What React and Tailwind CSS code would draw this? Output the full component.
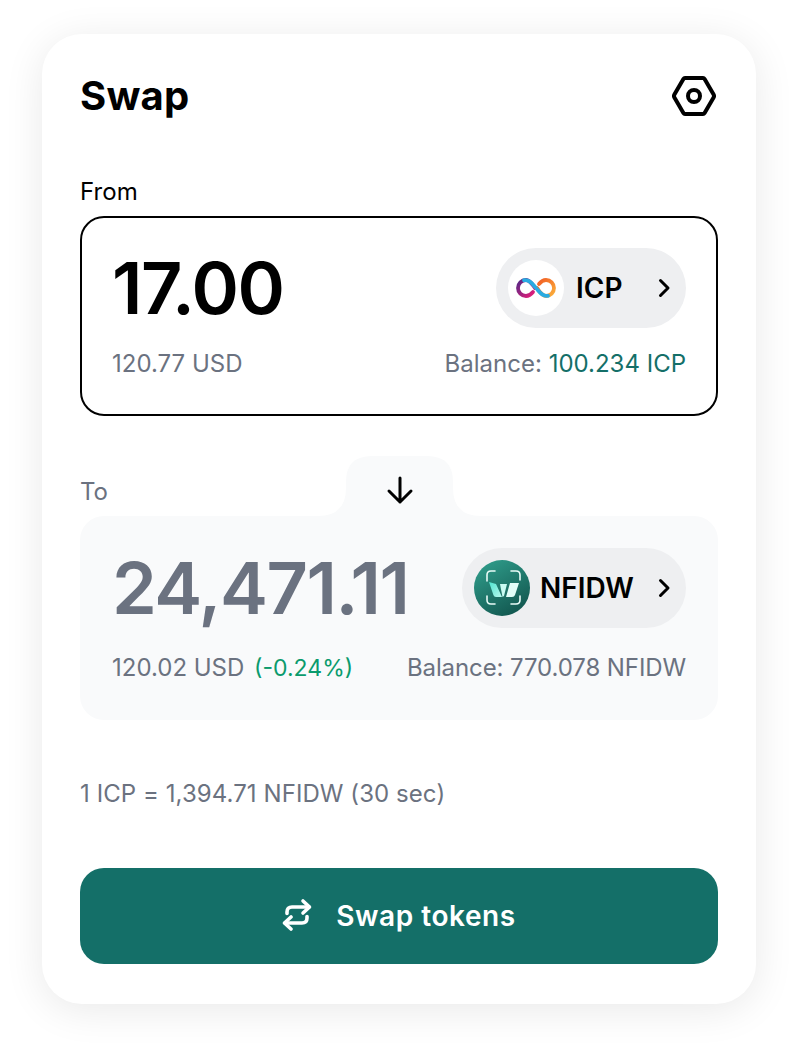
import React from 'react';

const Chevron = () => (
  <svg width="28" height="28" viewBox="0 0 28 28" fill="none" stroke="currentColor" strokeWidth="3" strokeLinecap="round" strokeLinejoin="round" className="text-black">
    <path d="M9.5 6.5 L17 14 L9.5 21.5" />
  </svg>
);

const IcpLogo = () => (
  <svg width="40" height="22" viewBox="0 0 40 22" fill="none" strokeWidth="3.8" strokeLinecap="round">
    <defs>
      <linearGradient id="icpLeft" x1="0" y1="0" x2="1" y2="1">
        <stop offset="0" stopColor="#522785" />
        <stop offset="1" stopColor="#ed1e79" />
      </linearGradient>
      <linearGradient id="icpRight" x1="0" y1="0" x2="1" y2="1">
        <stop offset="0" stopColor="#f15a24" />
        <stop offset="1" stopColor="#fbb03b" />
      </linearGradient>
    </defs>
    <path d="M19 11 C16 7 14 3 10 3 C5.5 3 2 6.5 2 11 C2 15.5 5.5 19 10 19 C12.5 19 15 17.5 17 15" stroke="url(#icpLeft)" />
    <path d="M21 11 C24 15 26 19 30 19 C34.5 19 38 15.5 38 11 C38 6.5 34.5 3 30 3 C27.5 3 25 4.5 23 7" stroke="url(#icpRight)" />
    <path d="M8 3.2 C14 2 17 8 20 11 C23 14 26 20 32 18.8" stroke="#29abe2" />
  </svg>
);

const NfidwLogo = () => (
  <svg width="56" height="56" viewBox="0 0 56 56" fill="none">
    <defs>
      <linearGradient id="nfidwBg" x1="0.2" y1="0" x2="0.8" y2="1">
        <stop offset="0" stopColor="#2f9c8a" />
        <stop offset="1" stopColor="#11544d" />
      </linearGradient>
      <linearGradient id="nfidwMark" x1="0" y1="0" x2="1" y2="1">
        <stop offset="0" stopColor="#4fe3cf" />
        <stop offset="1" stopColor="#b8f9ee" />
      </linearGradient>
    </defs>
    <circle cx="28" cy="28" r="28" fill="url(#nfidwBg)" />
    <g stroke="#e8fbf7" strokeWidth="1.6" strokeLinecap="round">
      <path d="M13 21 V15 Q13 11 17 11 H21" />
      <path d="M37 11 H42 Q46 11 46 15 V20" />
      <path d="M13 36 V40 Q13 44 17 44 H21" />
      <path d="M37 44 H42 Q46 44 46 40 V36" />
    </g>
    <path d="M15 22 L22 24 L28 37 H22 Q20 37 19.4 35 Z" fill="url(#nfidwMark)" />
    <path d="M26 24 H33 L30 36 L28.5 37 Z" fill="#c9fbf2" />
    <path d="M36 23 H45 L41 35 Q40.4 37 38 37 H32 Z" fill="#e2fdf8" />
  </svg>
);

const TokenPill = ({ logo, name, nameClass }) => (
  <button className="flex h-20 w-full items-center rounded-full bg-[#eeeff1] pl-3 pr-[7px]">
    {logo}
    <span className={`text-[28px] font-semibold leading-none text-black ${nameClass}`}>{name}</span>
    <span className="ml-auto"><Chevron /></span>
  </button>
);

export default function App() {
  return (
    <div className="min-h-[1054px] bg-white pl-[42px] pr-[42px] pt-[34px] font-['Inter',sans-serif]">
      <div className="h-[970px] w-[714px] rounded-[40px] bg-white px-[38px] shadow-[0_6px_40px_rgba(0,0,0,0.09)]">
        <div className="flex h-[124px] items-center justify-between pb-[1px]">
          <h1 className="text-[40px] font-bold leading-none tracking-[0.2px] text-black">Swap</h1>
          <svg width="44" height="40" viewBox="0 0 44 40" fill="none" stroke="black" strokeWidth="4" strokeLinejoin="round" className="mr-[2px]">
            <path d="M13 2 H31 Q32 2 32.6 3 L41.6 18.6 Q42.4 20 41.6 21.4 L32.6 37 Q32 38 31 38 H13 Q12 38 11.4 37 L2.4 21.4 Q1.6 20 2.4 18.6 L11.4 3 Q12 2 13 2 Z" />
            <circle cx="22" cy="20" r="6" />
          </svg>
        </div>

        <p className="mt-[19px] h-[39px] text-[24px] leading-[30px] tracking-[0.05px] text-black">From</p>

        <div className="h-[200px] rounded-[24px] border-2 border-black px-[30px] pt-[30px]">
          <div className="flex h-[80px] items-center justify-between">
            <span className="text-[72px] font-semibold leading-none tracking-[-1.44px] text-black">17.00</span>
            <div className="w-[190px]">
              <TokenPill
                logo={<span className="flex h-14 w-14 items-center justify-center rounded-full bg-white"><IcpLogo /></span>}
                name="ICP"
                nameClass="ml-3"
              />
            </div>
          </div>
          <div className="mt-[20px] flex justify-between text-[24px] leading-[32px] text-[#6b7280]">
            <span>120.77 USD</span>
            <span>Balance: <span className="text-[#146f68]">100.234 ICP</span></span>
          </div>
        </div>

        <div className="relative mt-[40px] h-[60px]">
          <p className="pt-[21px] text-[24px] leading-[30px] text-[#6b7280]">To</p>
          <svg width="163" height="60" viewBox="0 0 163 60" className="absolute left-[238px] top-0 text-[#f9fafb]" fill="currentColor">
            <path d="M0 60 Q28 60 28 32 V26 Q28 0 54 0 H109 Q135 0 135 26 V32 Q135 60 163 60 Z" />
          </svg>
          <svg width="32" height="32" viewBox="0 0 32 32" fill="none" stroke="black" strokeWidth="3" strokeLinecap="round" strokeLinejoin="round" className="absolute left-[304px] top-[18px]">
            <path d="M16 4 V28 M5 17 L16 28 L27 17" />
          </svg>
        </div>

        <div className="h-[204px] rounded-[24px] bg-[#f9fafb] px-8 pt-8">
          <div className="flex h-[80px] items-center justify-between">
            <span className="text-[72px] font-semibold leading-none tracking-[-1.44px] text-[#6b7280]">24,471.11</span>
            <div className="w-[224px]">
              <TokenPill logo={<NfidwLogo />} name="NFIDW" nameClass="ml-[10px]" />
            </div>
          </div>
          <div className="mt-[24px] flex justify-between text-[24px] leading-[32px] text-[#6b7280]">
            <span>120.02 USD <span className="ml-[3px] text-[23px] text-[#0b9b6d]">(-0.24%)</span></span>
            <span className="tracking-[-0.1px]">Balance: 770.078 NFIDW</span>
          </div>
        </div>

        <p className="mt-[58px] text-[24px] leading-[32px] tracking-[0.07px] text-[#6b7280]">1 ICP = 1,394.71 NFIDW (30 sec)</p>

        <button className="mt-[58px] flex h-24 w-full items-center justify-center gap-[22px] rounded-[24px] bg-[#146f68] text-[28px] font-semibold tracking-[0.55px] text-white">
          <svg width="32" height="40" viewBox="0 0 32 40" fill="none" stroke="white" strokeWidth="3.6" strokeLinecap="round" strokeLinejoin="round">
            <path d="M21 5 L27.5 11 L21 17" />
            <path d="M27 11 H10 Q5 11 5 16 V17.5" />
            <path d="M9 21 L2.5 27 L9 33" />
            <path d="M3 27 H20 Q25 27 25 22 V20.5" />
          </svg>
          Swap tokens
        </button>
      </div>
    </div>
  );
}
